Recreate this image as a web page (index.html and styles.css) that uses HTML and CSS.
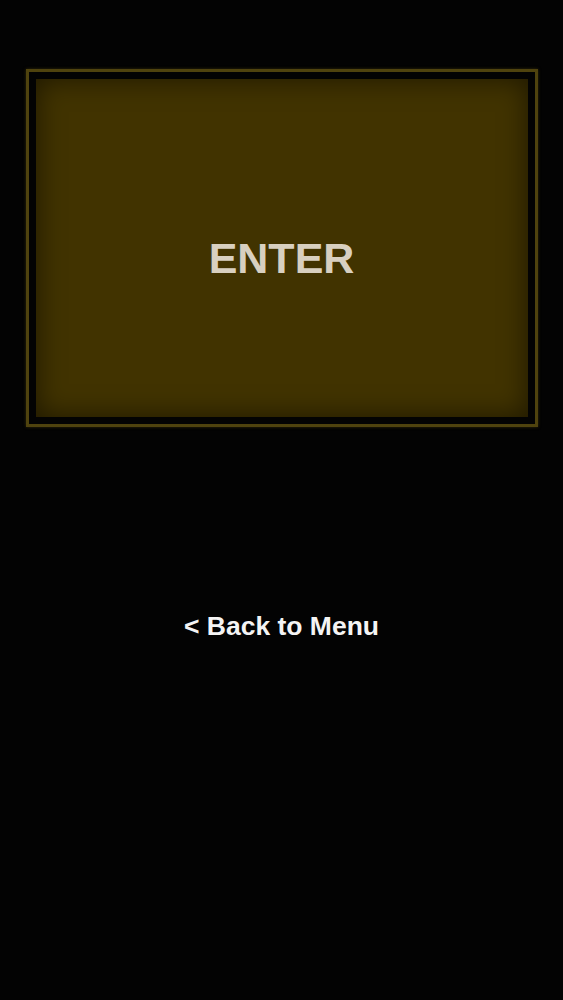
FILE: index.html
```html
<!DOCTYPE html>
<html>
<head>
<meta charset="utf-8">
<link rel="stylesheet" href="styles.css">
</head>
<body>
<div class="screen">
  <div class="frame">
    <div class="panel">
      <span class="enter">ENTER</span>
    </div>
  </div>
  <div class="back">&lt; Back to Menu</div>
</div>
</body>
</html>
```
FILE: styles.css
```css
html, body {
  margin: 0;
  padding: 0;
  background: #030303;
}
.screen {
  width: 563px;
  height: 1000px;
  display: flex;
  flex-direction: column;
  align-items: center;
  font-family: "Liberation Sans", Arial, sans-serif;
}
.frame {
  box-sizing: border-box;
  margin-top: 69px;
  width: 512px;
  height: 358px;
  border: 3px solid #4f430e;
  box-shadow: 0 0 3px rgba(80, 68, 14, 0.6);
  padding: 7px;
  background: #030303;
}
.panel {
  box-sizing: border-box;
  width: 100%;
  height: 100%;
  background: #413300;
  box-shadow: inset 0 0 26px 2px rgba(0, 0, 0, 0.5);
  display: flex;
  align-items: center;
  justify-content: center;
  padding-top: 20px;
}
.enter {
  font-size: 43px;
  font-weight: bold;
  color: #d8d0c0;
}
.back {
  margin-top: 184px;
  font-size: 26.5px;
  font-weight: bold;
  color: #f4f4f4;
}
```
